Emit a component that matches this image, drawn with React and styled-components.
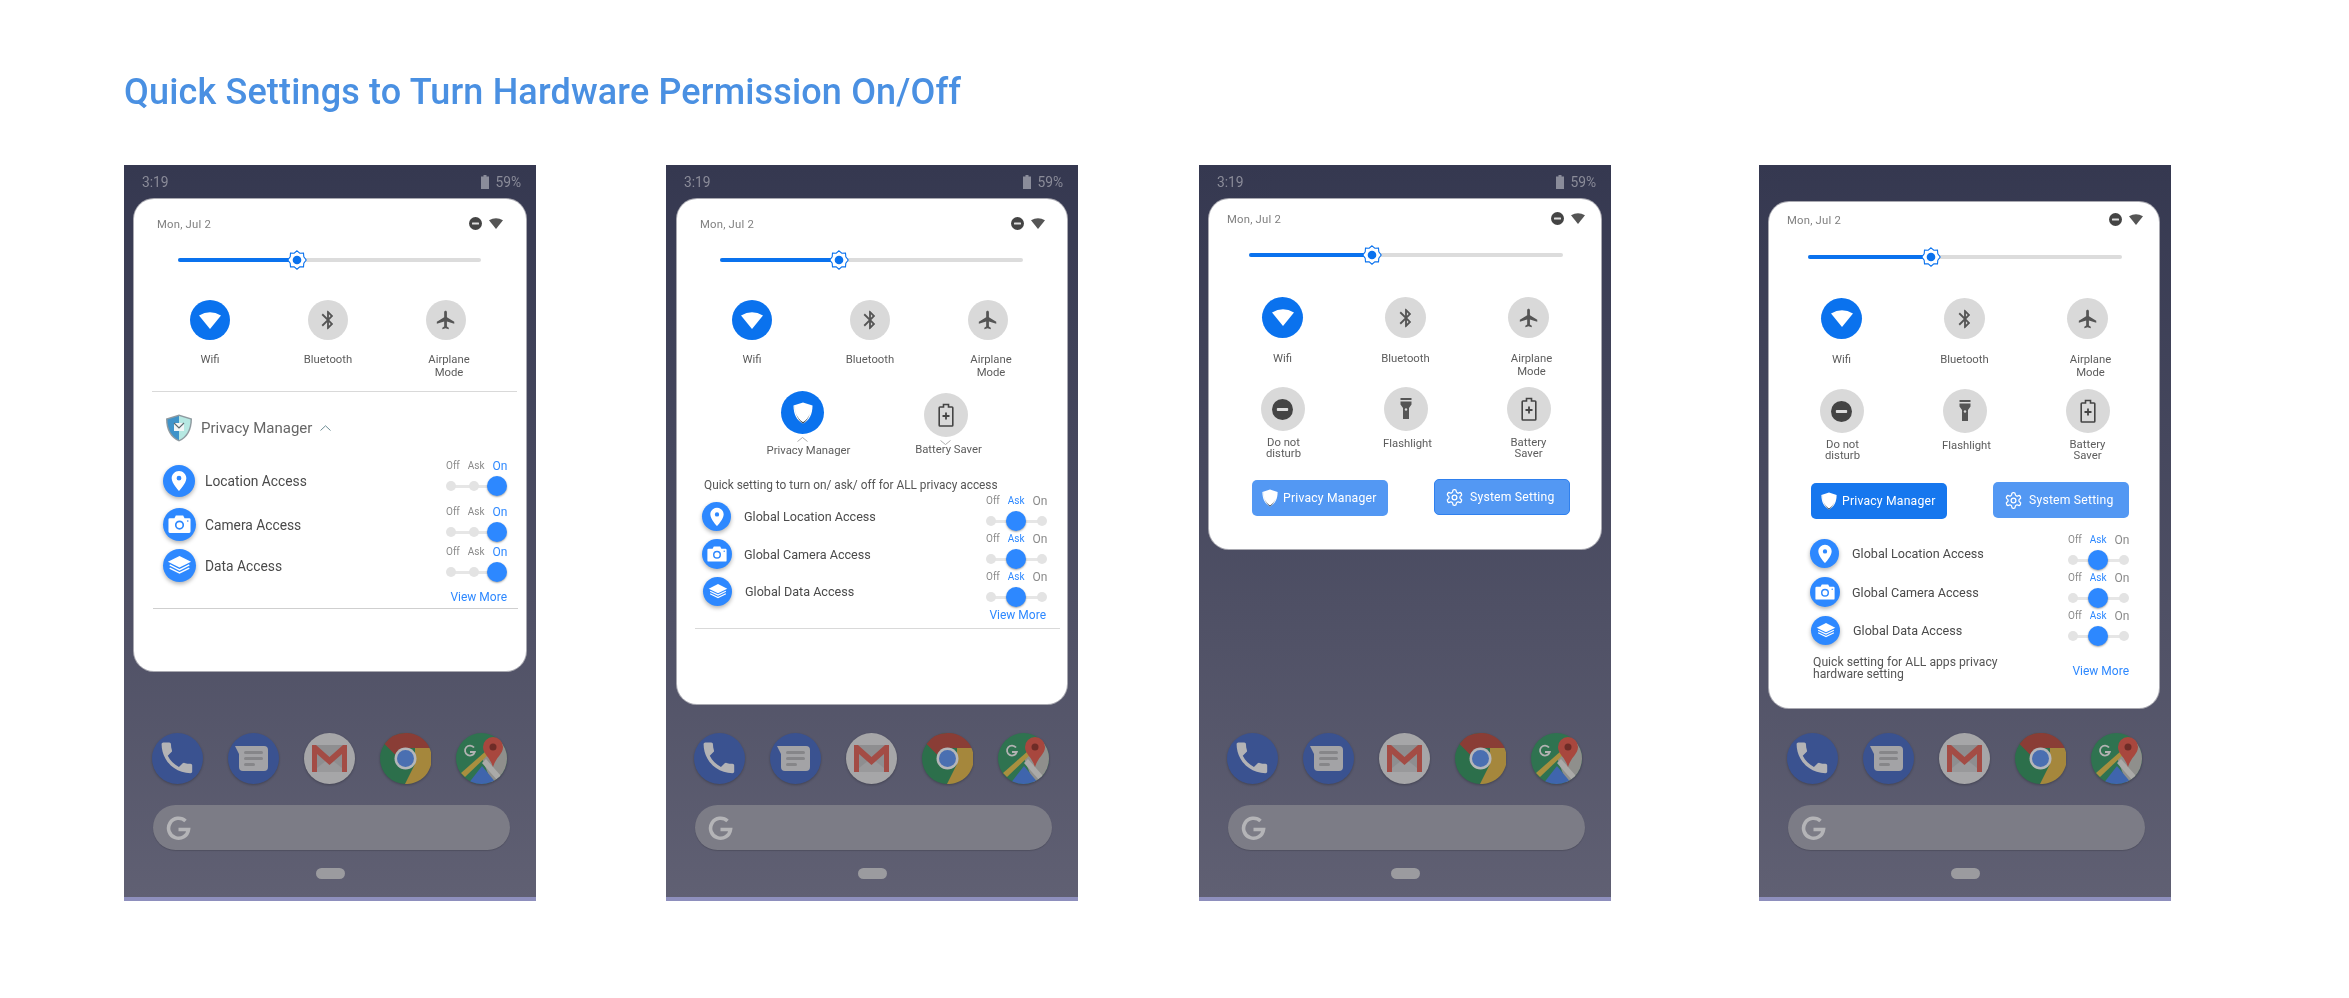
import React from "react";
import styled, { createGlobalStyle } from "styled-components";

const Global = createGlobalStyle`
  html, body { margin: 0; padding: 0; background: #fff; }
  body { font-family: Roboto, "Liberation Sans", sans-serif; }
`;

const Page = styled.div`
  width: 2349px;
  height: 998px;
  padding: 70px 0 0 124px;
  box-sizing: border-box;
  overflow: hidden;
`;
const Title = styled.h1`
  margin: 0 0 51px;
  font-size: 36px;
  line-height: 44px;
  font-weight: 500;
  color: #4a90e2;
  letter-spacing: 0.16px;
  filter: blur(0.4px);
`;
const PhoneRow = styled.div`
  display: flex;
`;
const Phone = styled.section`
  width: 412px;
  height: 736px;
  margin-left: ${(p) => p.$gap || 0}px;
  display: flex;
  flex-direction: column;
  background: linear-gradient(#353850, #606073);
  flex: none;
  filter: blur(0.35px);
`;
const StatusBar = styled.div`
  height: ${(p) => p.$h || 34}px;
  flex: none;
  display: flex;
  align-items: center;
  justify-content: space-between;
  padding: 0 15px 0 18px;
  box-sizing: border-box;
  color: #8b8c99;
  font-size: 13.8px;
`;
const StatusRight = styled.div`
  display: flex;
  align-items: center;
  gap: 6px;
`;
const Panel = styled.div`
  margin-left: ${(p) => p.$ml}px;
  width: ${(p) => p.$w}px;
  height: ${(p) => p.$h}px;
  box-sizing: border-box;
  flex: none;
  background: #fff;
  border-radius: 20px;
  box-shadow: 0 0 0 1px #a9a9b1;
  overflow: hidden;
`;
const QsHeader = styled.div`
  height: ${(p) => p.$h}px;
  display: flex;
  align-items: center;
  justify-content: space-between;
  padding: 0 ${(p) => p.$pr}px 0 ${(p) => p.$pl}px;
  font-size: 11.3px;
  color: #808080;
  letter-spacing: 0.2px;
`;
const QsIcons = styled.div`
  display: flex;
  align-items: center;
  gap: 7px;
  margin-top: -2px;
`;
const BrightnessRow = styled.div`
  height: ${(p) => p.$h}px;
  display: flex;
  align-items: center;
  padding-left: ${(p) => p.$pl}px;
`;
const BrightnessTrack = styled.div`
  width: ${(p) => p.$w}px;
  height: 4px;
  border-radius: 2px;
  background: #dcdcdc;
  display: flex;
  align-items: center;
`;
const BrightnessFill = styled.div`
  height: 4px;
  border-radius: 2px;
  background: #0a72ee;
  flex: none;
`;
const BrightnessThumb = styled.svg`
  width: 20px;
  height: 20px;
  margin-left: -10px;
  flex: none;
`;
const TileGrid = styled.div`
  display: grid;
  grid-template-columns: repeat(${(p) => p.$n || 3}, ${(p) => p.$col}px);
  grid-auto-rows: ${(p) => p.$row}px;
  margin-top: ${(p) => p.$mt}px;
  padding-left: ${(p) => p.$pl}px;
`;
const Tile = styled.div`
  display: flex;
  flex-direction: column;
  align-items: center;
`;
const TileCircle = styled.div`
  width: ${(p) => p.$d}px;
  height: ${(p) => p.$d}px;
  border-radius: 50%;
  flex: none;
  display: flex;
  align-items: center;
  justify-content: center;
  background: ${(p) => (p.$on ? "#0a72ee" : "#d9d9d9")};
  color: ${(p) => (p.$on ? "#fff" : "#555")};
  margin-top: ${(p) => p.$mt || 0}px;
`;
const TileLabel = styled.div`
  margin-top: ${(p) => p.$gap}px;
  margin-left: ${(p) => p.$shift || 0}px;
  font-size: 11.3px;
  line-height: ${(p) => p.$lh}px;
  color: #5c5c5c;
  text-align: center;
  white-space: nowrap;
`;
const Caret = styled.svg`
  display: block;
  width: 11px;
  height: 5px;
  margin-top: 3px;
  margin-left: ${(p) => p.$ml || 0}px;
  flex: none;
`;
const Divider = styled.div`
  height: 1px;
  background: ${(p) => p.$c || "#d9d9d9"};
  margin: ${(p) => p.$mt || 0}px ${(p) => p.$mr}px 0 ${(p) => p.$ml}px;
`;
const PrivacyTitle = styled.div`
  display: flex;
  align-items: center;
  height: 28px;
  margin-top: 22px;
  padding-left: 31px;
  gap: 8px;
  font-size: 15px;
  color: #666;
`;
const Rows = styled.div`
  display: flex;
  flex-direction: column;
  margin-top: ${(p) => p.$mt}px;
  padding: 0 ${(p) => p.$pr}px 0 ${(p) => p.$pl}px;
`;
const AccessRow = styled.div`
  display: flex;
  justify-content: space-between;
  align-items: flex-start;
  height: 36px;
  margin-top: ${(p) => p.$mt || 0}px;
`;
const AccessLeft = styled.div`
  display: flex;
  align-items: center;
  gap: ${(p) => p.$gap}px;
  margin-top: ${(p) => p.$top}px;
  margin-left: ${(p) => p.$ml || 0}px;
  font-size: ${(p) => p.$fs}px;
  color: #4a4a4a;
`;
const AccessIcon = styled.div`
  width: ${(p) => p.$d}px;
  height: ${(p) => p.$d}px;
  border-radius: 50%;
  background: #2d88ff;
  box-shadow: 0 2px 4px rgba(0, 0, 0, 0.3);
  display: flex;
  align-items: center;
  justify-content: center;
  flex: none;
`;
const Toggle = styled.div`
  width: 61px;
  flex: none;
`;
const ToggleLabels = styled.div`
  display: flex;
  align-items: center;
  justify-content: flex-start;
  gap: 8px;
  height: 12px;
  margin-bottom: 4px;
`;
const ToggleLabel = styled.span`
  font-size: ${(p) => (p.$big ? 12 : 10)}px;
  color: ${(p) => (p.$on ? "#2d88ff" : "#8a8a8a")};
  line-height: 12px;
`;
const ToggleTrack = styled.div`
  display: flex;
  align-items: center;
  height: 20px;
  background: linear-gradient(#e6e6e6, #e6e6e6) center / calc(100% - 10px) 3px no-repeat;
`;
const ToggleDot = styled.div`
  width: 10px;
  height: 10px;
  border-radius: 50%;
  background: #e3e3e3;
  margin-left: ${(p) => p.$ml}px;
  flex: none;
`;
const ToggleThumb = styled.div`
  width: 20px;
  height: 20px;
  border-radius: 50%;
  background: #2d88ff;
  box-shadow: 0 1px 2px rgba(0, 0, 0, 0.35);
  margin-left: ${(p) => p.$ml}px;
  flex: none;
`;
const ViewMore = styled.div`
  font-size: 12px;
  line-height: 16px;
  color: #2d88ff;
  text-align: right;
  margin-top: ${(p) => p.$mt || 0}px;
`;
const Quick = styled.div`
  margin: 0 0 0 27px;
  margin-top: ${(p) => p.$mt}px;
  font-size: 11.85px;
  line-height: 14px;
  color: #555;
`;
const ButtonRow = styled.div`
  display: flex;
  gap: 46px;
  padding-left: ${(p) => p.$pl}px;
  margin-top: ${(p) => p.$mt}px;
`;
const PanelButton = styled.div`
  width: 136px;
  height: 36px;
  border-radius: 5px;
  box-sizing: border-box;
  display: flex;
  align-items: center;
  gap: ${(p) => p.$gap}px;
  padding-left: ${(p) => p.$pl}px;
  background: ${(p) => (p.$on ? "#1677ee" : "#5398f3")};
  border: ${(p) => (p.$edge ? "1px solid #2f80ee" : "none")};
  color: #fff;
  font-size: 12.2px;
  letter-spacing: 0.2px;
  margin-top: ${(p) => p.$mt || 0}px;
`;
const FootRow = styled.div`
  display: flex;
  justify-content: space-between;
  align-items: flex-start;
  margin-top: 10px;
  padding: 0 30px 0 44px;
`;
const FootNote = styled.div`
  font-size: 12.2px;
  line-height: 12px;
  color: #555;
`;
const Dock = styled.div`
  margin-top: auto;
  display: flex;
  flex-direction: column;
`;
const DockIcons = styled.div`
  display: flex;
  justify-content: space-between;
  padding: 0 29px 0 28px;
`;
const DockIcon = styled.svg`
  width: 51px;
  height: 51px;
  filter: drop-shadow(0 1px 1px rgba(0, 0, 0, 0.25));
`;
const SearchPill = styled.div`
  height: 45px;
  margin: 21px 26px 0 29px;
  border-radius: 23px;
  background: #7c7c86;
  display: flex;
  align-items: center;
  padding-left: 12px;
  box-shadow: 0 1px 1px rgba(0, 0, 0, 0.15);
`;
const HomeBar = styled.div`
  width: 29px;
  height: 11px;
  border-radius: 6px;
  background: #9b9b9f;
  margin: 18px 0 18px 192px;
`;
const Stripe = styled.div`
  height: 4px;
  background: #8e8fbd;
`;

/* ---------- icons ---------- */
const BatteryMini = () => (
  <svg width="8" height="14" viewBox="0 0 8 14"><path d="M2.5 0h3v1.5H8V14H0V1.5h2.5z" fill="#8a8c9a" /></svg>
);
const Dnd = ({ s = 13 }) => (
  <svg width={s} height={s} viewBox="0 0 13 13">
    <circle cx="6.5" cy="6.5" r="6.5" fill="#444" />
    <rect x="3" y="5.6" width="7" height="1.8" rx="0.5" fill="#ddd" />
  </svg>
);
const WifiShape = ({ w = 14, h = 11, c = "#555" }) => (
  <svg width={w} height={h} viewBox="0 0 22 17">
    <path d="M0 3.5Q11-3 22 3.5L11 17z" fill={c} />
  </svg>
);
const Bluetooth = () => (
  <svg width="22" height="22" viewBox="0 0 24 24" fill="#555">
    <path d="M17.71 7.71L12 2h-1v7.59L6.41 5 5 6.41 10.59 12 5 17.59 6.41 19 11 14.41V22h1l5.71-5.71-4.3-4.29 4.3-4.29zM13 5.83l1.88 1.88L13 9.59V5.83zm1.88 10.46L13 18.17v-3.76l1.88 1.88z" />
  </svg>
);
const Plane = () => (
  <svg width="22" height="22" viewBox="0 0 24 24" fill="#555">
    <path d="M21 16v-2l-8-5V3.5c0-.83-.67-1.5-1.5-1.5S10 2.67 10 3.5V9l-8 5v2l8-2.5V19l-2 1.5V22l3.5-1 3.5 1v-1.5L13 19v-5.5l8 2.5z" />
  </svg>
);
const Flash = () => (
  <svg width="24" height="26" viewBox="0 0 24 26" fill="#555">
    <path d="M6.5 2h11v2h-11zM6.5 5.5h11v3l-2.5 3.5V23H9V12L6.5 8.5z" />
    <circle cx="12" cy="13.5" r="1.2" fill="#d9d9d9" />
  </svg>
);
const BatteryPlus = () => (
  <svg width="18" height="24" viewBox="0 0 18 24" fill="none" stroke="#444" strokeWidth="1.6">
    <path d="M3 4h3.500V1.500h5V4H15a.8.8 0 0 1 .8.8v17.400a.8.8 0 0 1-.8.8H3a.8.8 0 0 1-.8-.8V4.800A.8.8 0 0 1 3 4z" />
    <path d="M9 9.500v7M5.500 13h7" strokeWidth="1.8" />
  </svg>
);
const Shield = ({ w = 20, h = 22 }) => (
  <svg width={w} height={h} viewBox="0 0 20 22">
    <path d="M10 0.500L19.500 3.500C19.500 12 16.500 18.500 10 21.500 3.500 18.500 0.500 12 0.500 3.500z" fill="#fff" />
    <path d="M2 3.900C2 11 5 17 10 19.800 6 18.500 1.800 13 1 4.200z" fill="#e4edf4" />
    <path d="M17 11.500C15.500 15.500 13 18.700 10 20.300 7 18.700 4.500 15.500 3 11.500 4.500 16 7 19.500 10 21.500 13 19.500 15.500 16 17 11.500z" fill="#2b3a4a" />
  </svg>
);
const Logo = () => (
  <svg width="28" height="28" viewBox="0 0 28 28">
    <path d="M14 .5L27 4.500C27 16 22.500 24 14 27.500 5.500 24 1 16 1 4.500z" fill="#8f9aa0" />
    <path d="M14 2L14 26C7 23 2.500 15.500 2.500 5.500z" fill="#3f93c9" />
    <path d="M14 2L25.500 5.500C25.500 15.500 21 23 14 26z" fill="#b6e8e2" />
    <rect x="9" y="9" width="10" height="8" fill="#f2f6f6" />
    <path d="M9 9l5 5 5-5" fill="none" stroke="#5c6a70" strokeWidth="1.2" />
  </svg>
);
const Gear = () => (
  <svg width="19" height="19" viewBox="0 0 24 24" fill="none" stroke="#fff" strokeWidth="1.6" strokeLinecap="round" strokeLinejoin="round">
    <path d="M12.220 2h-.44a2 2 0 0 0-2 2v.18a2 2 0 0 1-1 1.730l-.43.25a2 2 0 0 1-2 0l-.15-.08a2 2 0 0 0-2.730.73l-.22.38a2 2 0 0 0 .73 2.730l.15.1a2 2 0 0 1 1 1.720v.51a2 2 0 0 1-1 1.740l-.15.09a2 2 0 0 0-.73 2.730l.22.38a2 2 0 0 0 2.730.73l.15-.08a2 2 0 0 1 2 0l.43.25a2 2 0 0 1 1 1.730V20a2 2 0 0 0 2 2h.44a2 2 0 0 0 2-2v-.18a2 2 0 0 1 1-1.730l.43-.25a2 2 0 0 1 2 0l.15.08a2 2 0 0 0 2.730-.73l.22-.39a2 2 0 0 0-.73-2.730l-.15-.08a2 2 0 0 1-1-1.740v-.5a2 2 0 0 1 1-1.740l.15-.09a2 2 0 0 0 .73-2.730l-.22-.38a2 2 0 0 0-2.730-.73l-.15.08a2 2 0 0 1-2 0l-.43-.25a2 2 0 0 1-1-1.730V4a2 2 0 0 0-2-2z" />
    <circle cx="12" cy="12" r="3" />
  </svg>
);
const Pin = ({ s }) => (
  <svg width={s} height={s} viewBox="0 0 24 24">
    <path fill="#fff" fillRule="evenodd" d="M12 1C7.600 1 4 4.600 4 9c0 5.500 8 14 8 14s8-8.500 8-14c0-4.400-3.600-8-8-8zm0 10.500a2.600 2.600 0 1 1 0-5.200 2.600 2.600 0 0 1 0 5.200z" />
  </svg>
);
const Camera = ({ s }) => (
  <svg width={s} height={s * 0.8} viewBox="0 0 25 20">
    <path fill="#fff" fillRule="evenodd" d="M2 3.500h5L8.500.500h8L18 3.500h5a1.500 1.500 0 0 1 1.500 1.500v13a1.500 1.500 0 0 1-1.500 1.500H2A1.500 1.500 0 0 1 .5 18V5A1.500 1.500 0 0 1 2 3.500zM12.500 6a5 5 0 1 0 0 10 5 5 0 0 0 0-10zm0 1.800a3.200 3.200 0 1 1 0 6.400 3.200 3.200 0 0 1 0-6.400z" />
    <circle cx="21.500" cy="6.500" r="0.9" fill="#2d88ff" />
  </svg>
);
const Layers = ({ s }) => (
  <svg width={s} height={s * 0.75} viewBox="0 0 28 21">
    <path d="M14 0L27 6.500 14 13 1 6.500z" fill="#fff" />
    <path d="M3 10L14 15.500 25 10M3 13.500L14 19 25 13.500" stroke="#fff" strokeWidth="1.600" fill="none" />
  </svg>
);

/* dock art */
const PhoneArt = () => (
  <DockIcon viewBox="0 0 51 51">
    <circle cx="25.500" cy="25.500" r="25.500" fill="#3a5290" />
    <path transform="translate(4.500 4.500) scale(1.7)" fill="#b3b3b5" d="M6.620 10.790c1.440 2.830 3.760 5.140 6.590 6.590l2.200-2.200c.27-.27.67-.36 1.020-.24 1.120.37 2.330.57 3.570.57.55 0 1 .45 1 1V20c0 .55-.45 1-1 1-9.390 0-17-7.610-17-17 0-.55.45-1 1-1h3.500c.55 0 1 .45 1 1 0 1.250.2 2.450.57 3.570.11.35.03.74-.25 1.020l-2.200 2.200z" />
  </DockIcon>
);
const MessagesArt = () => (
  <DockIcon viewBox="0 0 51 51">
    <circle cx="25.500" cy="25.500" r="25.500" fill="#3a5290" />
    <path d="M7 13h29a4 4 0 0 1 4 4v17a4 4 0 0 1-4 4H15a4 4 0 0 1-4-4V21z" fill="#a3a3a6" />
    <rect x="16" y="18" width="19" height="3" rx="1.500" fill="#868689" />
    <rect x="16" y="24" width="19" height="3" rx="1.500" fill="#868689" />
    <rect x="16" y="30" width="11" height="3" rx="1.500" fill="#868689" />
  </DockIcon>
);
const GmailArt = () => (
  <DockIcon viewBox="0 0 51 51">
    <circle cx="25.500" cy="25.500" r="25.500" fill="#a6a6a8" />
    <rect x="8" y="12" width="35" height="27" rx="1.500" fill="#8e8e90" />
    <path d="M8 39L25.500 25 43 39z" fill="#99999b" />
    <path d="M8 12h4l13.500 12L39 12h4v27h-5V21L25.500 32 13 21v18H8z" fill="#a34c45" />
  </DockIcon>
);
const ChromeArt = () => (
  <DockIcon viewBox="0 0 51 51">
    <circle cx="25.500" cy="25.500" r="25.500" fill="#2c6f4b" />
    <path d="M25.500 0A25.500 25.500 0 0 1 49.500 15H25.500A10.500 10.500 0 0 0 15.500 22L4.500 11A25.500 25.500 0 0 1 25.500 0z" fill="#8a3d36" />
    <path d="M49.500 15A25.500 25.500 0 0 1 25 51L35 31L35 15z" fill="#a5873c" />
    <circle cx="25.500" cy="25.500" r="11" fill="#b5b6b9" />
    <circle cx="25.500" cy="25.500" r="8.500" fill="#4a6fb1" />
  </DockIcon>
);
const MapsArt = () => (
  <DockIcon viewBox="0 0 51 51">
    <defs><clipPath id="mapClip"><circle cx="25.500" cy="25.500" r="25.500" /></clipPath></defs>
    <g clipPath="url(#mapClip)">
      <rect width="51" height="51" fill="#2f7350" />
      <path d="M26 25L51 0V51H36z" fill="#8f8f8c" />
      <path d="M12 51L26 33 41 51z" fill="#3f65ad" />
      <path d="M5 40L30 18 33 21 9 44z" fill="#a98f3f" />
      <path d="M26 30L30 26 45 43 41 47z" fill="#aaaaa8" />
    </g>
    <path d="M37 4a10 10 0 0 1 10 10c0 7-7 10-10 20-3-10-10-13-10-20A10 10 0 0 1 37 4z" fill="#a8473e" />
    <circle cx="37" cy="14" r="3.500" fill="#6e2c27" />
    <path d="M18 14.500a5 5 0 1 0 .8 4.500H14" fill="none" stroke="#b3b3b3" strokeWidth="1.800" />
  </DockIcon>
);
const GLogo = () => (
  <svg width="26" height="26" viewBox="0 0 26 26" fill="none" stroke="#b4b4b7" strokeWidth="3.600">
    <path d="M20.500 6a10 10 0 1 0 3 8.500H13.500" />
  </svg>
);

/* ---------- composed parts ---------- */
const Header = ({ h, pl, pr }) => (
  <QsHeader $h={h} $pl={pl} $pr={pr}>
    <span>Mon, Jul 2</span>
    <QsIcons><Dnd /><WifiShape /></QsIcons>
  </QsHeader>
);
const Brightness = ({ h, pl, w }) => (
  <BrightnessRow $h={h} $pl={pl}>
    <BrightnessTrack $w={w}>
      <BrightnessFill style={{ width: Math.round(w * 0.393) }} />
      <BrightnessThumb viewBox="0 0 20 20">
        <path d="M10 .8l2.800 2.400 3.700-.1.300 3.600L19.200 10l-2.400 3.300-.3 3.600-3.700-.1L10 19.200l-2.800-2.400-3.700.1-.3-3.600L.8 10l2.400-3.300.3-3.600 3.700.1z" fill="#fff" stroke="#0a72ee" strokeWidth="1.100" />
        <circle cx="10" cy="10" r="4.300" fill="#0a72ee" />
      </BrightnessThumb>
    </BrightnessTrack>
  </BrightnessRow>
);
const TopTiles = ({ d, gap }) => (
  <>
    <Tile>
      <TileCircle $d={d} $on><WifiShape w={22} h={17} c="#fff" /></TileCircle>
      <TileLabel $gap={gap} $lh={13}>Wifi</TileLabel>
    </Tile>
    <Tile>
      <TileCircle $d={d}><Bluetooth /></TileCircle>
      <TileLabel $gap={gap} $lh={13}>Bluetooth</TileLabel>
    </Tile>
    <Tile>
      <TileCircle $d={d}><Plane /></TileCircle>
      <TileLabel $gap={gap} $lh={13} $shift={6}>Airplane<br />Mode</TileLabel>
    </Tile>
  </>
);
const SecondTiles = () => (
  <>
    <Tile>
      <TileCircle $d={44}><Dnd s={21} /></TileCircle>
      <TileLabel $gap={6} $lh={11} $shift={2}>Do not<br />disturb</TileLabel>
    </Tile>
    <Tile>
      <TileCircle $d={44}><Flash /></TileCircle>
      <TileLabel $gap={7} $lh={11} $shift={4}>Flashlight</TileLabel>
    </Tile>
    <Tile>
      <TileCircle $d={44}><BatteryPlus /></TileCircle>
      <TileLabel $gap={6} $lh={11}>Battery<br />Saver</TileLabel>
    </Tile>
  </>
);
const Switch = ({ value }) => (
  <Toggle>
    <ToggleLabels>
      <ToggleLabel>Off</ToggleLabel>
      <ToggleLabel $on={value === "ask"}>Ask</ToggleLabel>
      <ToggleLabel $big $on={value === "on"}>On</ToggleLabel>
    </ToggleLabels>
    {value === "on" ? (
      <ToggleTrack>
        <ToggleDot $ml={0} />
        <ToggleDot $ml={13} />
        <ToggleThumb $ml={8} />
      </ToggleTrack>
    ) : (
      <ToggleTrack>
        <ToggleDot $ml={0} />
        <ToggleThumb $ml={10} />
        <ToggleDot $ml={11} />
      </ToggleTrack>
    )}
  </Toggle>
);
const Row = ({ icon, d, gap, fs, top, mt, ml, label, value }) => (
  <AccessRow $mt={mt}>
    <AccessLeft $top={top} $gap={gap} $fs={fs} $ml={ml}>
      <AccessIcon $d={d}>{icon}</AccessIcon>
      {label}
    </AccessLeft>
    <Switch value={value} />
  </AccessRow>
);
const CaretIcon = ({ up, ml }) => (
  <Caret viewBox="0 0 11 5" $ml={ml}>
    <path d={up ? "M.5 4.500L5.500.5l5 4" : "M.5.5l5 4 5-4"} fill="none" stroke="#999" strokeWidth="0.8" />
  </Caret>
);
const PhoneDock = () => (
  <Dock>
    <DockIcons>
      <PhoneArt /><MessagesArt /><GmailArt /><ChromeArt /><MapsArt />
    </DockIcons>
    <SearchPill><GLogo /></SearchPill>
    <HomeBar />
    <Stripe />
  </Dock>
);
const Status = () => (
  <StatusBar>
    <span>3:19</span>
    <StatusRight><BatteryMini /><span>59%</span></StatusRight>
  </StatusBar>
);
const GlobalRows = ({ mt, pl, pr, tops }) => (
  <Rows $mt={mt} $pl={pl} $pr={pr}>
    <Row icon={<Pin s={20} />} d={29} gap={13} fs={12.6} top={tops[0]} label="Global Location Access" value="ask" />
    <Row icon={<Camera s={20} />} d={30} gap={12} fs={12.6} top={tops[1]} mt={2} label="Global Camera Access" value="ask" />
    <Row icon={<Layers s={20} />} d={29} gap={13} fs={12.6} top={tops[2]} ml={1} mt={2} label="Global Data Access" value="ask" />
  </Rows>
);

export default function App() {
  return (
    <Page>
      <Global />
      <Title>Quick Settings to Turn Hardware Permission On/Off</Title>
      <PhoneRow>
        <Phone>
          <Status />
          <Panel $ml={10} $w={392} $h={472}>
            <Header h={50} pl={23} pr={23} />
            <Brightness h={22} pl={44} w={303} />
            <TileGrid $col={118} $row={91} $mt={29} $pl={17}><TopTiles d={40} gap={13} /></TileGrid>
            <Divider $ml={18} $mr={9} />
            <PrivacyTitle>
              <Logo />
              <span>Privacy Manager</span>
              <svg width="11" height="6" viewBox="0 0 11 6"><path d="M.5 5.500L5.500.8l5 4.700" fill="none" stroke="#5c7f88" strokeWidth="0.9" /></svg>
            </PrivacyTitle>
            <Rows $mt={18} $pl={29} $pr={19}>
              <Row icon={<Pin s={22} />} d={32} gap={10} fs={13.8} top={5} label="Location Access" value="on" />
              <Row icon={<Camera s={23} />} d={33} gap={9} fs={13.8} top={2} mt={10} label="Camera Access" value="on" />
              <Row icon={<Layers s={25} />} d={33} gap={9} fs={13.8} top={3} mt={4} label="Data Access" value="on" />
              <ViewMore $mt={7}>View More</ViewMore>
            </Rows>
            <Divider $ml={19} $mr={8} $c="#cfcfcf" $mt={3} />
          </Panel>
          <PhoneDock />
        </Phone>

        <Phone $gap={130}>
          <Status />
          <Panel $ml={11} $w={390} $h={505}>
            <Header h={50} pl={23} pr={22} />
            <Brightness h={22} pl={43} w={303} />
            <TileGrid $col={118} $row={91} $mt={29} $pl={16}><TopTiles d={40} gap={13} /></TileGrid>
            <TileGrid $n={2} $col={143} $row={71} $mt={0} $pl={54}>
              <Tile>
                <TileCircle $d={43} $on><Shield /></TileCircle>
                <CaretIcon up />
                <TileLabel $gap={2} $lh={13} $shift={12}>Privacy Manager</TileLabel>
              </Tile>
              <Tile>
                <TileCircle $d={44} $mt={2}><BatteryPlus /></TileCircle>
                <CaretIcon />
                <TileLabel $gap={-2} $lh={13} $shift={6}>Battery Saver</TileLabel>
              </Tile>
            </TileGrid>
            <Quick $mt={16}>Quick setting to turn on/ ask/ off for ALL privacy access</Quick>
            <GlobalRows mt={3} pl={25} pr={20} tops={[7, 6, 6]} />
            <Rows $mt={0} $pl={25} $pr={21}><ViewMore>View More</ViewMore></Rows>
            <Divider $ml={18} $mr={7} $mt={5} />
          </Panel>
          <PhoneDock />
        </Phone>

        <Phone $gap={121}>
          <Status />
          <Panel $ml={10} $w={392} $h={350}>
            <Header h={40} pl={18} pr={16} />
            <Brightness h={32} pl={40} w={314} />
            <TileGrid $col={123} $row={90} $mt={26} $pl={12}><TopTiles d={41} gap={14} /></TileGrid>
            <TileGrid $col={123} $row={71} $mt={0} $pl={12}><SecondTiles /></TileGrid>
            <ButtonRow $mt={21} $pl={43}>
              <PanelButton $gap={5} $pl={10} $mt={1}><Shield w={16} h={18} />Privacy Manager</PanelButton>
              <PanelButton $gap={6} $pl={10} $edge><Gear />System Setting</PanelButton>
            </ButtonRow>
          </Panel>
          <PhoneDock />
        </Phone>

        <Phone $gap={148}>
          <StatusBar $h={37} />
          <Panel $ml={10} $w={390} $h={506}>
            <Header h={36} pl={18} pr={16} />
            <Brightness h={38} pl={39} w={314} />
            <TileGrid $col={123} $row={91} $mt={22} $pl={11}><TopTiles d={41} gap={14} /></TileGrid>
            <TileGrid $col={123} $row={71} $mt={0} $pl={11}><SecondTiles /></TileGrid>
            <ButtonRow $mt={22} $pl={42}>
              <PanelButton $gap={5} $pl={10} $on $mt={1}><Shield w={16} h={18} />Privacy Manager</PanelButton>
              <PanelButton $gap={6} $pl={11}><Gear />System Setting</PanelButton>
            </ButtonRow>
            <GlobalRows mt={15} pl={41} pr={30} tops={[5, 5, 6]} />
            <FootRow>
              <FootNote>Quick setting for ALL apps privacy<br />hardware setting</FootNote>
              <ViewMore $mt={7}>View More</ViewMore>
            </FootRow>
          </Panel>
          <PhoneDock />
        </Phone>
      </PhoneRow>
    </Page>
  );
}
